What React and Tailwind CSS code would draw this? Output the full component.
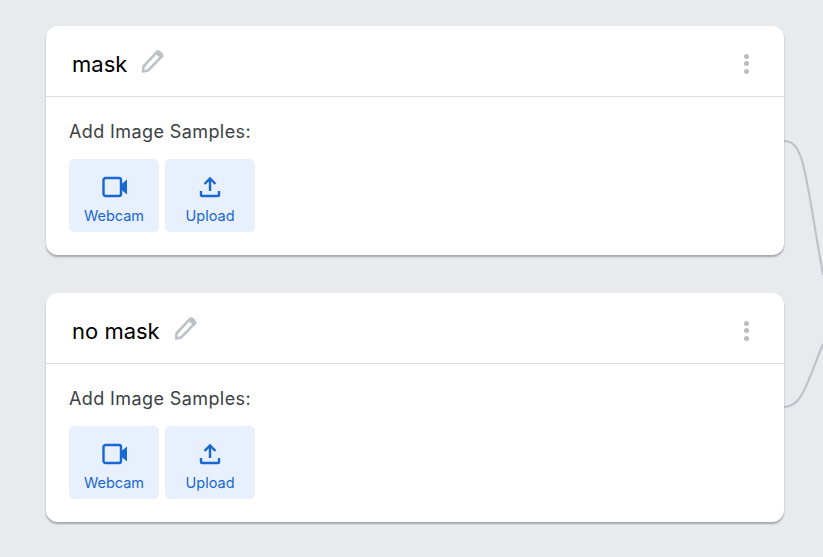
const sans = "font-['Inter','Liberation_Sans',sans-serif]";

function Pencil() {
  return (
    <svg width="26" height="26" viewBox="0 0 26 26" fill="none" className="ml-[13px]">
      <path
        d="M3.5 18.5 L16.8 4.2 Q18 3 19.3 4 L21.6 6.2 Q22.6 7.3 21.5 8.6 L8.2 22.4 L3.2 23.4 Z"
        stroke="#bdc1c6"
        strokeWidth="2.6"
        strokeLinejoin="round"
      />
      <path d="M16 3.5 L22.5 9.5" stroke="#bdc1c6" strokeWidth="4" />
    </svg>
  );
}

function Dots() {
  return (
    <div className="flex flex-col gap-[2.5px] mr-[35px] mt-[5px]">
      <span className="w-[5px] h-[5px] rounded-full bg-[#bdbdbd]" />
      <span className="w-[5px] h-[5px] rounded-full bg-[#bdbdbd]" />
      <span className="w-[5px] h-[5px] rounded-full bg-[#bdbdbd]" />
    </div>
  );
}

function WebcamIcon() {
  return (
    <svg width="26" height="22" viewBox="0 0 26 22" fill="none" className="ml-[1px]">
      <rect x="1.5" y="2" width="17.5" height="18" rx="2" stroke="#1967d2" strokeWidth="2.4" />
      <path d="M19 8.5 L25 3.5 V18.5 L19 13.5 Z" fill="#1967d2" />
    </svg>
  );
}

function UploadIcon() {
  return (
    <svg width="22" height="22" viewBox="0 0 22 22" fill="none">
      <path d="M11 15 V3" stroke="#1967d2" strokeWidth="2.4" />
      <path d="M5.5 8 L11 2.5 L16.5 8" stroke="#1967d2" strokeWidth="2.4" />
      <path d="M2 15 V19 Q2 20 3 20 H19 Q20 20 20 19 V15" stroke="#1967d2" strokeWidth="2.4" />
    </svg>
  );
}

function SampleButton({ icon, label }) {
  return (
    <button className="w-[90px] h-[73px] rounded-[5px] bg-[#e8f0fe] flex flex-col items-center text-[#1967d2]">
      <span className="h-[22px] mt-[17px] flex items-center">{icon}</span>
      <span className="text-[14.5px] leading-[18px] mt-[9px]">{label}</span>
    </button>
  );
}

function ClassCard({ name }) {
  return (
    <div className="w-[738px] h-[229px] bg-white rounded-xl shadow-[0_2px_2px_rgba(60,64,67,0.4)]">
      <div className="h-[71px] border-b border-[#dadce0] flex items-center justify-between pl-[26px]">
        <div className="flex items-center">
          <span className="text-[22px] text-black mt-[6px]">{name}</span>
          <Pencil />
        </div>
        <Dots />
      </div>
      <div className="pl-[23px] pt-[23px]">
        <div className="text-[18px] tracking-[0.4px] leading-[24px] text-[#3c4043]">Add Image Samples:</div>
        <div className="flex gap-[6px] mt-[15px]">
          <SampleButton icon={<WebcamIcon />} label="Webcam" />
          <SampleButton icon={<UploadIcon />} label="Upload" />
        </div>
      </div>
    </div>
  );
}

export default function App() {
  return (
    <div className={`${sans} relative w-[823px] h-[557px] overflow-hidden bg-[#e8eaed]`}>
      {/* wires from the cards into the next node */}
      <svg width="823" height="557" className="absolute inset-0" fill="none">
        <path d="M784 141 C805 141 805 175 823 275" stroke="#bdc1c6" strokeWidth="2" />
        <path d="M784 407 C802 407 806 385 823 344" stroke="#bdc1c6" strokeWidth="2" />
      </svg>
      <div className="relative flex flex-col gap-[38px] pl-[46px] pt-[26px]">
        <ClassCard name="mask" />
        <ClassCard name="no mask" />
      </div>
    </div>
  );
}
